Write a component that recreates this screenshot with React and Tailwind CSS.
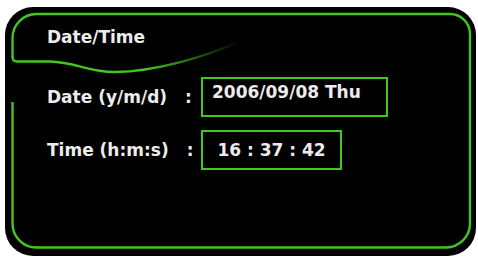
import React from "react";

const GREEN = "#43c61f";

function Frame() {
  return (
    <svg
      className="absolute inset-0 pointer-events-none"
      width="471"
      height="249"
      viewBox="0 0 471 249"
      fill="none"
    >
      <defs>
        <linearGradient id="tabFade" x1="0" y1="0" x2="236" y2="0" gradientUnits="userSpaceOnUse">
          <stop offset="0" stopColor={GREEN} stopOpacity="1" />
          <stop offset="0.6" stopColor={GREEN} stopOpacity="1" />
          <stop offset="1" stopColor={GREEN} stopOpacity="0" />
        </linearGradient>
      </defs>
      {/* outer frame, open on the left between the tab and y=95 */}
      <path
        d="M 7.5 95 L 7.5 216 A 24 24 0 0 0 31.5 240.5 L 441 240.5 A 24 24 0 0 0 465 216.5 L 465 27 A 20 20 0 0 0 445 7 L 31.5 7 A 24 24 0 0 0 7.5 31 L 7.5 50"
        stroke={GREEN}
        strokeWidth="2.4"
      />
      {/* tab underline */}
      <path
        d="M 7.5 50 Q 7.5 54.5 12 54.5 L 45 54.5 C 70 55, 85 65.5, 110 65 C 150 64.5, 200 50, 236 34"
        stroke="url(#tabFade)"
        strokeWidth="2.4"
        strokeLinecap="round"
      />
    </svg>
  );
}

function Row({ label, value, center, className }) {
  return (
    <div className={"flex items-center " + (className || "")}>
      <div className="w-[154px] flex items-center">
        <span>{label}</span>
        <span className="ml-[18px]">:</span>
      </div>
      <div
        className={
          "h-[40px] border-2 border-[#43c61f] flex " +
          (center
            ? "w-[141px] items-center justify-center"
            : "w-[187px] items-start pl-[9px] pt-[3px]")
        }
      >
        <span className="leading-[20px]">{value}</span>
      </div>
    </div>
  );
}

export default function App() {
  return (
    <div className="w-[478px] h-[259px] bg-white pt-[7px] pl-[5px]">
      <div
        className="relative w-[471px] h-[249px] bg-black rounded-[28px] pl-[42px] pt-[20px] text-[17px] leading-[20px] font-bold text-[#ececec]"
        style={{ fontFamily: '"DejaVu Sans", sans-serif' }}
      >
        <Frame />
        <div className="relative">Date/Time</div>
        <Row
          className="relative mt-[30px]"
          label="Date (y/m/d)"
          value="2006/09/08 Thu"
        />
        <Row
          className="relative mt-[13px]"
          label="Time (h:m:s)"
          value="16 : 37 : 42"
          center
        />
      </div>
    </div>
  );
}
